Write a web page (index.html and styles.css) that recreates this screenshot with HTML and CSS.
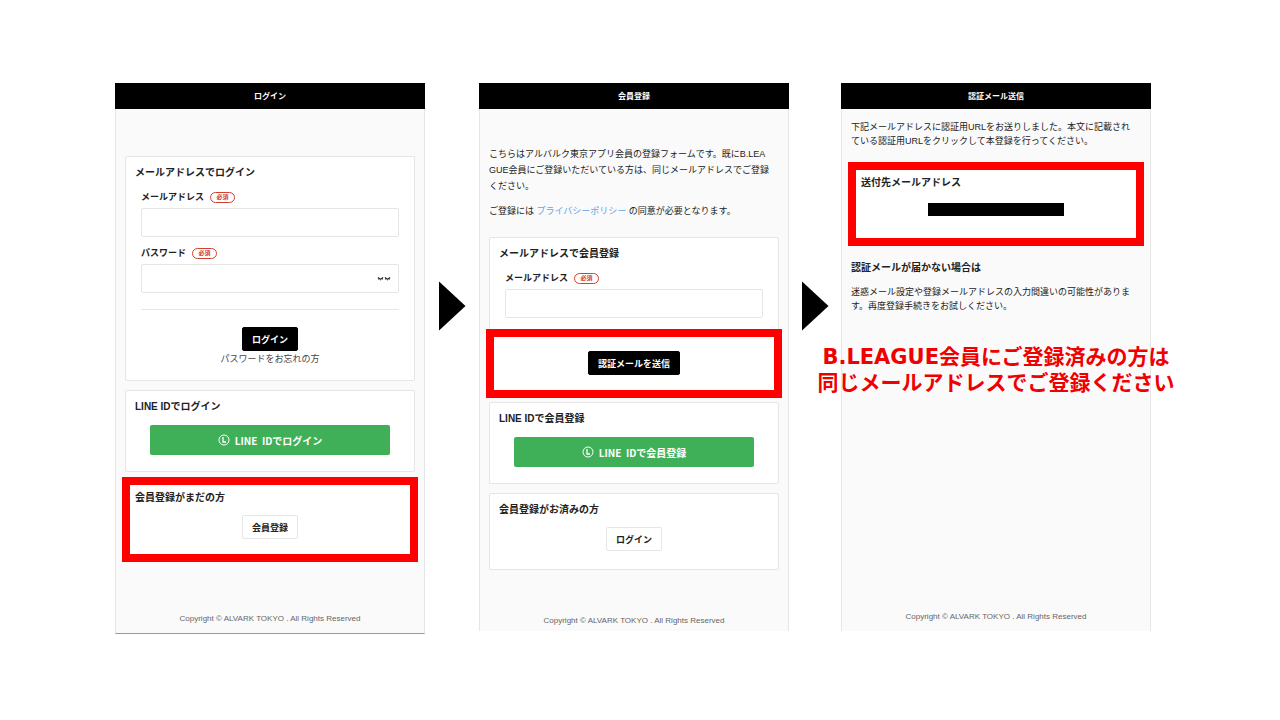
FILE: index.html
```html
<!DOCTYPE html>
<html lang="ja">
<head>
  <meta charset="UTF-8">
  <meta name="viewport" content="width=device-width, initial-scale=1.0">
  <title>会員登録の流れ</title>
  <link rel="stylesheet" href="styles.css">
</head>
<body>
  <main class="steps">

    <!-- ログイン -->
    <section class="phone phone-login">
      <h1 class="phone-title">ログイン</h1>
      <div class="phone-body">
        <form class="card">
          <h2>メールアドレスでログイン</h2>
          <div class="fields">
            <label for="login-mail">メールアドレス <span class="required">必須</span></label>
            <input type="email" id="login-mail">
            <label for="login-pass">パスワード <span class="required">必須</span></label>
            <div class="password">
              <input type="password" id="login-pass">
              <button type="button" class="eye" aria-label="パスワードを表示">
                <svg width="14" height="6" viewBox="0 0 14 6" fill="none" stroke="#222">
                  <path d="M1 1.500Q3.500 4.500 6 1.500M8 1.500Q10.500 4.500 13 1.500" stroke-width="1.200"/>
                  <path d="M2 2.500L1.500 3.800M3.500 3V4.500M5 2.500L5.500 3.800M9 2.500L8.500 3.800M10.500 3V4.500M12 2.500L12.500 3.800" stroke-width=".6"/>
                </svg>
              </button>
            </div>
          </div>
          <hr>
          <div class="actions">
            <button type="submit" class="btn btn-black">ログイン</button>
            <a href="#" class="forgot">パスワードをお忘れの方</a>
          </div>
        </form>

        <div class="card card-line">
          <h2>LINE IDでログイン</h2>
          <button type="button" class="btn-line">
            <svg width="12" height="12" viewBox="0 0 12 12" fill="none" stroke="#fff">
              <circle cx="6" cy="6" r="5"/>
              <path d="M5 3V8H8" stroke-width="1.300"/>
            </svg>
            LINE&nbsp; IDでログイン
          </button>
        </div>

        <div class="card card-switch marked">
          <h2>会員登録がまだの方</h2>
          <div class="actions">
            <button type="button" class="btn btn-white">会員登録</button>
          </div>
        </div>
      </div>
      <footer>Copyright © ALVARK TOKYO . All Rights Reserved</footer>
    </section>

    <div class="arrow"></div>

    <!-- 会員登録 -->
    <section class="phone phone-register">
      <h1 class="phone-title">会員登録</h1>
      <div class="phone-body">
        <div class="intro">
          <p>こちらはアルバルク東京アプリ会員の登録フォームです。既にB.LEAGUE会員にご登録いただいている方は、同じメールアドレスでご登録ください。</p>
          <p>ご登録には <a href="#">プライバシーポリシー</a> の同意が必要となります。</p>
        </div>
        <form class="card">
          <h2>メールアドレスで会員登録</h2>
          <div class="fields">
            <label for="register-mail">メールアドレス <span class="required">必須</span></label>
            <input type="email" id="register-mail">
          </div>
          <div class="actions marked">
            <button type="submit" class="btn btn-black">認証メールを送信</button>
          </div>
        </form>

        <div class="card card-line">
          <h2>LINE IDで会員登録</h2>
          <button type="button" class="btn-line">
            <svg width="12" height="12" viewBox="0 0 12 12" fill="none" stroke="#fff">
              <circle cx="6" cy="6" r="5"/>
              <path d="M5 3V8H8" stroke-width="1.300"/>
            </svg>
            LINE&nbsp; IDで会員登録
          </button>
        </div>

        <div class="card card-switch">
          <h2>会員登録がお済みの方</h2>
          <div class="actions">
            <button type="button" class="btn btn-white">ログイン</button>
          </div>
        </div>
      </div>
      <footer>Copyright © ALVARK TOKYO . All Rights Reserved</footer>
    </section>

    <div class="arrow"></div>

    <!-- 認証メール送信 -->
    <section class="phone phone-sent">
      <h1 class="phone-title">認証メール送信</h1>
      <div class="phone-body">
        <p>下記メールアドレスに認証用URLをお送りしました。本文に記載されている認証用URLをクリックして本登録を行ってください。</p>
        <div class="card marked">
          <h2>送付先メールアドレス</h2>
          <div class="redacted"></div>
        </div>
        <div class="help">
          <h2>認証メールが届かない場合は</h2>
          <p>迷惑メール設定や登録メールアドレスの入力間違いの可能性があります。再度登録手続きをお試しください。</p>
        </div>
      </div>
      <footer>Copyright © ALVARK TOKYO . All Rights Reserved</footer>
      <p class="callout">B.LEAGUE会員にご登録済みの方は<br>同じメールアドレスでご登録ください</p>
    </section>

  </main>
</body>
</html>
```

FILE: styles.css
```css
* {
  box-sizing: border-box;
}

body {
  margin: 0;
  background: #fff;
  color: #222;
  font-family: "Liberation Sans", "Noto Sans CJK JP", sans-serif;
  font-size: 9px;
}

h1, h2, p {
  margin: 0;
}

.steps {
  display: grid;
  grid-template-columns: 1fr 54px 1fr 52px 1fr;
  align-items: start;
  padding: 83px 129px 0 115px;
}

/* 画面 */
.phone {
  position: relative;
  display: flex;
  flex-direction: column;
  min-height: 548px;
  background: #fafafa;
  border: 1px solid #e6e6e6;
  border-width: 0 1px;
}

.phone-login {
  min-height: 551px;
  border-bottom: 1px solid #999;
}

.phone-title {
  margin: 0 -1px;
  padding-top: 2px;
  background: #000;
  color: #fff;
  font-size: 8px;
  line-height: 24px;
  text-align: center;
}

.phone-body {
  display: flex;
  flex-direction: column;
  gap: 9px;
  padding: 0 9px;
}

.phone-login .phone-body {
  padding-top: 47px;
}

.phone-register .phone-body {
  padding-top: 37px;
}

.phone-sent .phone-body {
  padding-top: 11px;
  gap: 18px;
}

.phone p {
  padding-right: 8px;
  line-height: 14px;
  word-break: break-all;
}

.phone .intro p {
  margin-bottom: 9px;
  line-height: 16px;
}

.intro a {
  color: #5aa5ee;
  text-decoration: none;
}

footer {
  margin-top: auto;
  padding-bottom: 6px;
  color: #666;
  font-size: 8px;
  line-height: 16px;
  text-align: center;
}

.phone-register footer {
  padding-bottom: 2px;
}

/* カード */
.card {
  padding: 8px 9px 15px;
  background: #fff;
  border: 1px solid #e6e6e6;
  border-radius: 2px;
}

.phone-login form.card {
  padding-bottom: 13px;
}

.phone-register form.card {
  padding-bottom: 17px;
}

.card-line {
  padding-bottom: 16px;
}

.card-switch {
  padding-bottom: 18px;
}

h2 {
  font-size: 10px;
  line-height: 16px;
}

.fields {
  display: flex;
  flex-direction: column;
  margin: 8px 6px 0;
}

label {
  display: flex;
  align-items: center;
  gap: 6px;
  margin-bottom: 3px;
  font-weight: bold;
  line-height: 16px;
}

.required {
  width: 25px;
  border: 1px solid #d0402f;
  border-radius: 6px;
  color: #d0402f;
  font-size: 6px;
  line-height: 9px;
  text-align: center;
}

input {
  width: 100%;
  height: 29px;
  padding: 0 8px;
  background: #fff;
  border: 1px solid #e6e6e6;
  border-radius: 2px;
  font-size: 9px;
}

.fields input + label {
  margin-top: 8px;
}

.password {
  position: relative;
}

.eye {
  position: absolute;
  top: 8px;
  right: 8px;
  display: flex;
  align-items: center;
  height: 14px;
  padding: 0;
  background: none;
  border: 0;
}

hr {
  height: 1px;
  margin: 16px 6px 17px;
  background: #e6e6e6;
  border: 0;
}

.actions {
  display: flex;
  flex-direction: column;
  align-items: center;
}

.phone-register form .actions {
  margin-top: 33px;
}

h2 + .actions {
  margin-top: 9px;
}

.btn {
  height: 24px;
  padding: 0 9px;
  border: 1px solid #000;
  border-radius: 2px;
  font-family: "Noto Sans CJK JP", sans-serif;
  font-size: 9px;
  font-weight: bold;
}

.btn-black {
  background: #000;
  color: #fff;
}

.btn-white {
  background: #fff;
  border-color: #e6e6e6;
  color: #222;
}

.forgot {
  color: #444;
  line-height: 16px;
  text-decoration: none;
}

.btn-line {
  display: flex;
  align-items: center;
  justify-content: center;
  gap: 5px;
  width: calc(100% - 30px);
  height: 30px;
  margin: 10px auto 0;
  padding: 0;
  background: #40b058;
  border: 0;
  border-radius: 2px;
  color: #fff;
  font-family: "Noto Sans CJK JP", sans-serif;
  font-size: 10px;
  font-weight: bold;
}

.redacted {
  width: 136px;
  height: 13px;
  margin: 12px auto 10px;
  background: #000;
}

.help p {
  margin-top: 9px;
}

/* 赤枠 */
.marked {
  position: relative;
}

.marked::after {
  content: "";
  position: absolute;
  inset: -5px -4px;
  border: 8px solid #f00;
  pointer-events: none;
}

.actions.marked::after {
  inset: -22px -13px -23px;
}

.arrow {
  width: 27px;
  height: 50px;
  margin: 198px auto 0;
  background: #000;
  clip-path: polygon(0 0, 100% 50%, 0 100%);
}

.phone .callout {
  position: absolute;
  top: 261px;
  left: 50%;
  transform: translateX(-50%);
  padding: 0;
  color: #f00000;
  font-family: "DejaVu Sans", "Noto Sans CJK JP", sans-serif;
  font-size: 21px;
  font-weight: bold;
  line-height: 26px;
  text-align: center;
  white-space: nowrap;
}
```
